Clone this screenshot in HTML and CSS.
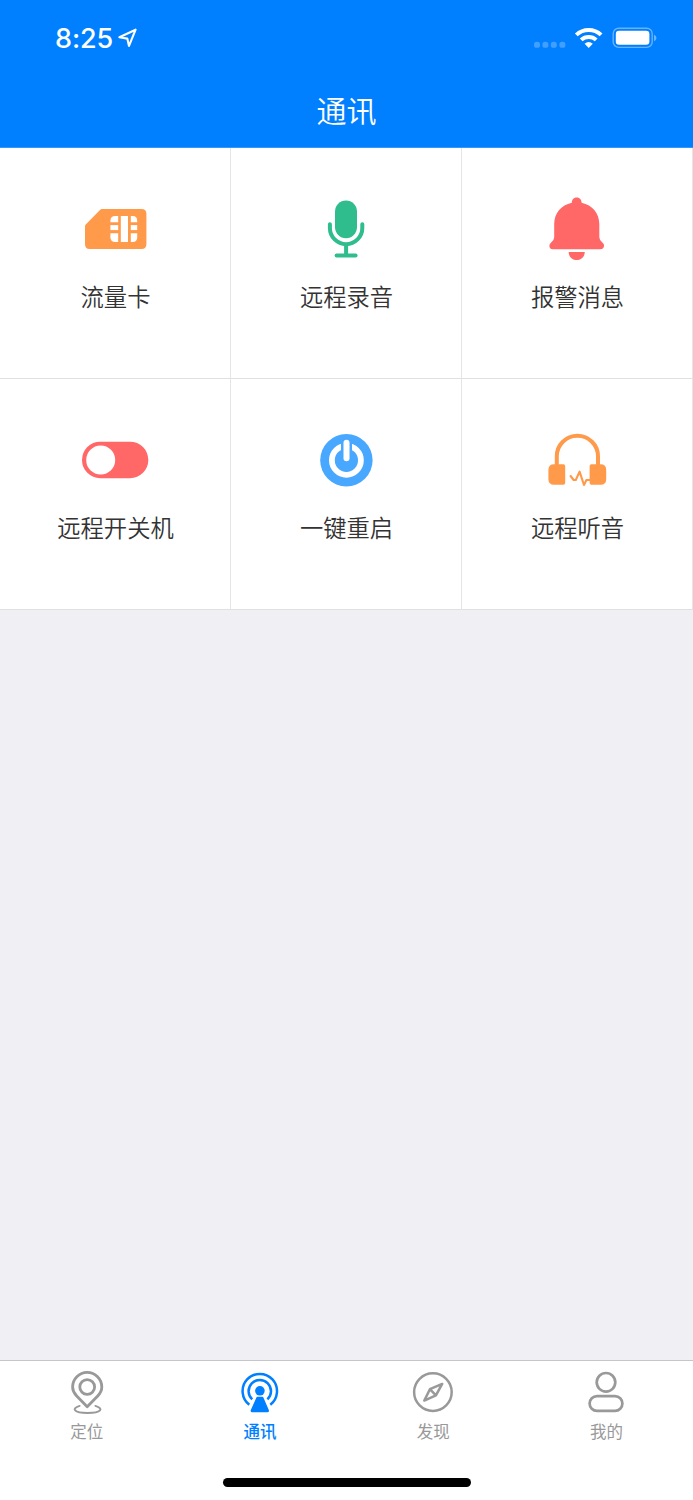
FILE: index.html
```html
<!DOCTYPE html>
<html lang="zh-CN">
<head>
<meta charset="utf-8">
<title>通讯</title>
<link rel="stylesheet" href="styles.css">
</head>
<body>
<div class="screen">
  <header class="header">
    <div class="status">
      <div class="status-left">
        <span class="time">8:25</span>
        <svg class="location" width="20" height="20" viewBox="118 28 20 20"><path d="M119.4 37.3 L135.6 29.7 L129 45.9 L127.3 38.6 Z" fill="none" stroke="#fff" stroke-width="2.1" stroke-linejoin="round"/></svg>
      </div>
      <svg class="status-right" width="126" height="26" viewBox="532 25 126 26">
        <g fill="#409fff"><rect x="534" y="41.8" width="6" height="6" rx="2.6"/><rect x="542.4" y="41.8" width="6" height="6" rx="2.6"/><rect x="550.8" y="41.8" width="6" height="6" rx="2.6"/><rect x="559.4" y="41.8" width="6" height="6" rx="2.6"/></g>
        <g fill="none" stroke="#fff" stroke-width="4"><path d="M576.3 34.9 A18 18 0 0 1 601.1 34.9"/><path d="M581.2 39.9 A11 11 0 0 1 596.2 39.9"/></g>
        <path d="M588.7 47.9 L584.6 43.8 Q588.7 40.4 592.8 43.8 Z" fill="#fff"/>
        <rect x="613.2" y="28.2" width="39" height="19.2" rx="5.5" fill="none" stroke="#66b3ff" stroke-width="1.4"/>
        <rect x="615.8" y="30.8" width="33.6" height="14" rx="3.2" fill="#fff"/>
        <path d="M654 34.8 Q656.5 35.7 656.5 38 Q656.5 40.3 654 41.2 Z" fill="#66b3ff"/>
      </svg>
    </div>
    <h1 class="title">通讯</h1>
  </header>

  <main class="content">
    <div class="grid">
      <div class="cell">
        <svg class="cell-icon" viewBox="75 189 80 80">
          <path d="M101.8 209 H141.6 Q146.4 209 146.4 213.8 V244.2 Q146.4 249 141.6 249 H89.6 Q85 249 85 244.2 V226.6 Q85 225.2 86 224.2 L100 210 Q101 209 101.8 209 Z" fill="#ff9a4a"/>
          <g fill="#fff"><path d="M118.2 216 V222.2 H110.4 V220.8 Q110.4 216 115.2 216 Z"/><path d="M110.4 225.1 h7.8 v5 h-7.8 Z"/><path d="M110.4 233.2 H118.2 V242 H115.2 Q110.4 242 110.4 237.2 Z"/><path d="M120.8 216 h7.2 v26 h-7.2 Z"/><path d="M130.8 216 H132.8 Q137.2 216 137.2 220.8 V222.2 H130.8 Z"/><path d="M130.8 225.1 h6.4 v5 h-6.4 Z"/><path d="M130.8 233.2 H137.2 V237.2 Q137.2 242 132.8 242 H130.8 Z"/></g>
        </svg>
        <span class="label">流量卡</span>
      </div>
      <div class="cell">
        <svg class="cell-icon" viewBox="306 189 80 80">
          <rect x="335" y="200.5" width="22" height="37.7" rx="11" fill="#2fbd8d"/>
          <path d="M329.9 224.2 V228 A16.2 16.2 0 0 0 362.3 228 V224.2 M346.1 244.5 V255.2 M336.6 255.4 H355.6" fill="none" stroke="#2fbd8d" stroke-width="4" stroke-linecap="round"/>
        </svg>
        <span class="label">远程录音</span>
      </div>
      <div class="cell">
        <svg class="cell-icon" viewBox="537 189 80 80">
          <path d="M571.8 202.8 C571.8 195.6 581.6 195.6 581.6 202.8 C592.5 205.2 599.3 213.5 599.3 224 V237.2 Q599.3 240 602.6 242.8 Q604.2 244.3 604 246 Q603.6 249.3 600.2 249.3 H552.8 Q549.6 249.3 549.4 246 Q549.3 244.3 550.9 242.8 Q554.2 240 554.2 237.2 V224 C554.2 213.5 561 205.2 571.8 202.8 Z M568.6 252 H584.8 C584.2 262.8 569.2 262.8 568.6 252 Z" fill="#ff6867"/>
        </svg>
        <span class="label">报警消息</span>
      </div>
      <div class="cell">
        <svg class="cell-icon" viewBox="75 420 80 80">
          <rect x="82" y="441.7" width="66.3" height="36.5" rx="18.2" fill="#ff6867"/>
          <circle cx="100.7" cy="460" r="14.5" fill="#fff"/>
        </svg>
        <span class="label">远程开关机</span>
      </div>
      <div class="cell">
        <svg class="cell-icon" viewBox="306 420 80 80">
          <circle cx="346.4" cy="460.3" r="26.2" fill="#48a8ff"/>
          <circle cx="346.4" cy="460.3" r="14.5" fill="none" stroke="#fff" stroke-width="5.8"/>
          <path d="M341 440 H352 V460 H341 Z" fill="#48a8ff"/>
          <path d="M346.5 442.8 V458.2" stroke="#fff" stroke-width="6" stroke-linecap="round"/>
        </svg>
        <span class="label">一键重启</span>
      </div>
      <div class="cell">
        <svg class="cell-icon" viewBox="537 420 80 80">
          <g fill="#ff9a4a"><path d="M554 464.3 H563.4 Q565.2 464.3 565.2 466.1 V483 Q565.2 484.8 563.4 484.8 H554 Q548.4 484.8 548.4 479 V470 Q548.4 464.3 554 464.3 Z"/><path d="M591.4 464.3 H600.6 Q606.2 464.3 606.2 470 V479 Q606.2 484.8 600.6 484.8 H591.4 Q589.6 484.8 589.6 483 V466.1 Q589.6 464.3 591.4 464.3 Z"/></g>
          <path d="M556.8 465.5 V456.3 A20.6 20.6 0 0 1 598 456.3 V465.5" fill="none" stroke="#ff9a4a" stroke-width="4"/>
          <path d="M570.6 476 L573.6 480 H575.8 L579.6 471.6 L584 485 L586.4 480 H590" fill="none" stroke="#ff9a4a" stroke-width="2.1" stroke-linejoin="round" stroke-linecap="round"/>
        </svg>
        <span class="label">远程听音</span>
      </div>
    </div>
  </main>

  <nav class="tabs">
    <div class="tab">
      <svg class="tab-icon" viewBox="62.6 1368 48 48" fill="none" stroke="#999" stroke-width="2.8" stroke-linejoin="round" stroke-linecap="round">
        <path d="M86.8 1406.8 L76.3 1396 C73.5 1393 72.2 1390.3 72.2 1387 A14.6 14.6 0 0 1 101.4 1387 C101.4 1390.3 100.1 1393 97.3 1396 Z"/><circle cx="86.8" cy="1387" r="7.4"/>
        <path d="M79.2 1405.9 C70.5 1408.5 73.4 1413 87.2 1413 C101 1413 103.8 1408.5 95 1405.9" stroke-width="2"/>
      </svg>
      <span class="tab-label">定位</span>
    </div>
    <div class="tab active">
      <svg class="tab-icon" viewBox="235.9 1368 48 48" fill="none" stroke="#007fff" stroke-width="2.5">
        <path d="M249.2 1404.7 A17.2 17.2 0 1 1 270.2 1404.7"/><path d="M252.1 1399.4 A11.2 11.2 0 1 1 267.3 1399.4"/>
        <circle cx="259.8" cy="1390.8" r="4.8" fill="#007fff" stroke="none"/>
        <path d="M257.2 1396.8 H262.4 Q263 1396.8 263.3 1397.6 L268.7 1410 Q269.4 1412.2 267.2 1412.2 H252.2 Q250 1412.2 250.7 1410 L256.3 1397.6 Q256.6 1396.8 257.2 1396.8 Z" fill="#007fff" stroke="none"/>
      </svg>
      <span class="tab-label">通讯</span>
    </div>
    <div class="tab">
      <svg class="tab-icon" viewBox="409.1 1368 48 48" fill="none" stroke="#999" stroke-width="2.5" stroke-linejoin="round">
        <circle cx="433" cy="1392.1" r="18.8"/><path d="M442.3 1383.9 L430 1389.2 L424.4 1400.6 L436 1395.4 Z M430 1389.2 L436 1395.4"/>
      </svg>
      <span class="tab-label">发现</span>
    </div>
    <div class="tab">
      <svg class="tab-icon" viewBox="582.4 1368 48 48" fill="none" stroke="#999" stroke-width="2.7">
        <circle cx="606.4" cy="1382.3" r="9.3"/><rect x="590" y="1396.1" width="32.8" height="14.8" rx="7.4"/>
      </svg>
      <span class="tab-label">我的</span>
    </div>
  </nav>
  <div class="home"><div class="home-bar"></div></div>
</div>
</body>
</html>
```
FILE: styles.css
```css
* { box-sizing: border-box; }
body {
  margin: 0;
  font-family: "Noto Sans CJK SC", sans-serif;
  color: #333;
}
.screen {
  display: flex;
  flex-direction: column;
  width: 693px;
  height: 1500px;
  background: #efeff4;
}
.header {
  height: 148px;
  background: #007fff;
  border-bottom: 1px solid #3398fb;
  color: #fff;
}
.status {
  display: flex;
  justify-content: space-between;
  height: 74px;
  padding: 25px 35px 0 55px;
}
.status-left { display: flex; gap: 5px; height: 26px; }
.time {
  width: 58px;
  font: 500 27px/27px Inter, sans-serif;
  letter-spacing: -0.1px;
}
.location { margin-top: 3px; }
.title {
  margin: 0;
  font-size: 30px;
  line-height: 70px;
  font-weight: 350;
  text-align: center;
}
.content { flex: 1; }
.grid {
  display: grid;
  grid-template-columns: repeat(3, 231px);
  grid-auto-rows: 231px;
  background: #fff;
}
.cell {
  display: flex;
  flex-direction: column;
  align-items: center;
  padding-top: 41px;
  border-right: 1px solid #e5e5e5;
  border-bottom: 1px solid #e0e0e2;
}
.cell-icon { width: 80px; height: 80px; }
.label {
  margin-top: 10px;
  padding-left: 1px;
  font-size: 23.3px;
  line-height: 34px;
  font-weight: 350;
}
.tabs {
  display: flex;
  height: 94px;
  padding-top: 7px;
  background: #fff;
  border-top: 1px solid #c5c5cb;
}
.tab {
  flex: 1;
  display: flex;
  flex-direction: column;
  align-items: center;
  color: #999;
}
.tab.active { color: #007fff; }
.tab-icon { width: 48px; height: 48px; }
.tab-label {
  margin-top: 3px;
  font-size: 16.5px;
  line-height: 24px;
  font-weight: 400;
}
.tab.active .tab-label { font-weight: 500; }
.home {
  display: flex;
  justify-content: center;
  height: 46px;
  padding-top: 24px;
  background: #fff;
}
.home-bar {
  width: 248px;
  height: 8.5px;
  border-radius: 5px;
  background: #000;
}
```
